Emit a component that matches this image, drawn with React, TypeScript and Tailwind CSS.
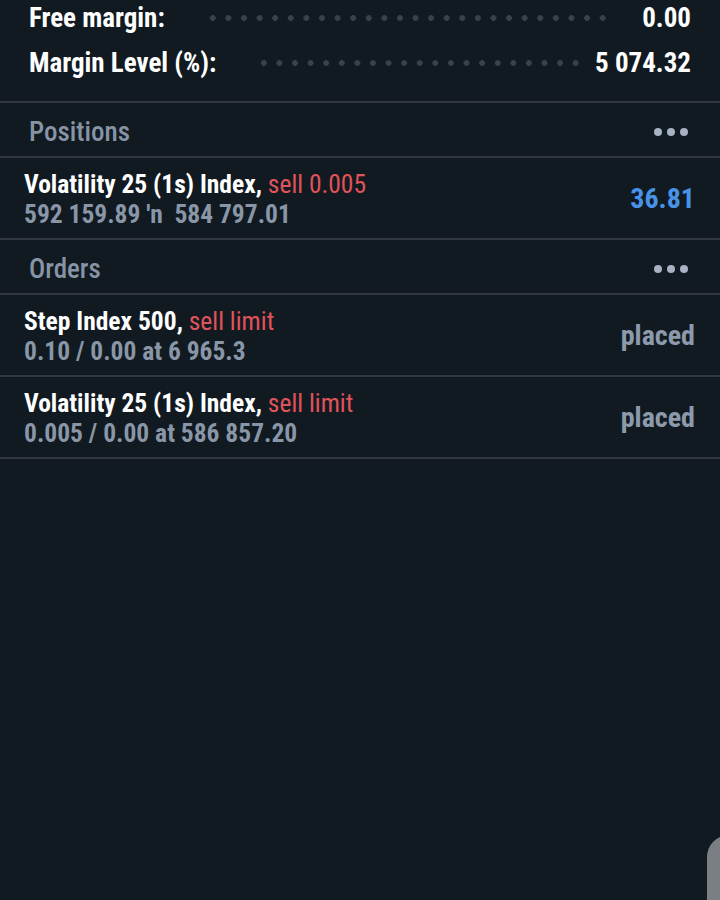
const font = "font-['Roboto_Condensed','Liberation_Sans_Narrow',Roboto,sans-serif] [font-stretch:condensed]";

type Order = { symbol: string; side: string; detail: string; state: string };

const orders: Order[] = [
    { symbol: 'Step Index 500,', side: 'sell limit', detail: '0.10 / 0.00 at 6 965.3', state: 'placed' },
    { symbol: 'Volatility 25 (1s) Index,', side: 'sell limit', detail: '0.005 / 0.00 at 586 857.20', state: 'placed' },
];

const Leader = ({ className }: { className: string }) => (
    <div className={`flex-1 h-[6px] bg-[radial-gradient(circle,#39414a_2.6px,transparent_3.1px)] bg-size-[15.6px_6px] bg-repeat-x ${className}`} />
);

const Divider = () => <div className="h-[2px] bg-[#30373f]" />;

const MoreDots = () => (
    <div className="flex gap-[5px]">
        <span className="w-[8px] h-[8px] rounded-full bg-[#a7b2c2]" />
        <span className="w-[8px] h-[8px] rounded-full bg-[#a7b2c2]" />
        <span className="w-[8px] h-[8px] rounded-full bg-[#a7b2c2]" />
    </div>
);

const SectionHeader = ({ title }: { title: string }) => (
    <div className="flex items-center justify-between h-[53px] pt-[5px] pl-[29px] pr-[32px]">
        <span className="text-[27px] font-medium text-[#8794a5]">{title}</span>
        <MoreDots />
    </div>
);

const TradeRow = ({ symbol, side, detail, right, rightClass }: { symbol: string; side: string; detail: string; right: string; rightClass: string }) => (
    <div className="flex items-center justify-between h-[80px] pt-[2px] pl-[24px] pr-[25px]">
        <div className="flex flex-col leading-[30px]">
            <div className="text-[25.5px]">
                <span className="font-bold text-white">{symbol}</span>{' '}
                <span className="text-[#e0535a]">{side}</span>
            </div>
            <div className="text-[25.5px] font-bold text-[#8996a7] whitespace-pre">{detail}</div>
        </div>
        <div className={rightClass}>{right}</div>
    </div>
);

export default function App() {
    return (
        <div className={`relative w-full h-[900px] overflow-hidden bg-[#111a21] ${font}`}>
            <div className="flex flex-col pt-[2px] pl-[29px] pr-[29px] pb-[22px]">
                <div className="flex items-center h-[32px]">
                    <span className="text-[27px] font-bold text-white">Free margin:</span>
                    <Leader className="ml-[40px] mr-[34px]" />
                    <span className="text-[27px] font-bold text-white">0.00</span>
                </div>
                <div className="flex items-center h-[32px] mt-[13px]">
                    <span className="text-[27px] font-bold text-white">Margin Level (%):</span>
                    <Leader className="ml-[40px] mr-[16px]" />
                    <span className="text-[27px] font-bold text-white">5 074.32</span>
                </div>
            </div>
            <Divider />
            <SectionHeader title="Positions" />
            <Divider />
            <TradeRow
                symbol="Volatility 25 (1s) Index,"
                side="sell 0.005"
                detail="592 159.89 ′n  584 797.01"
                right="36.81"
                rightClass="text-[28px] font-bold text-[#4793e8]"
            />
            <Divider />
            <SectionHeader title="Orders" />
            <Divider />
            {orders.map((o) => (
                <div key={o.detail}>
                    <TradeRow
                        symbol={o.symbol}
                        side={o.side}
                        detail={o.detail}
                        right={o.state}
                        rightClass="text-[28px] font-bold text-[#8d9aac]"
                    />
                    <Divider />
                </div>
            ))}
            <div className="absolute left-[707px] top-[835px] w-[40px] h-[100px] rounded-tl-[22px] bg-[#7b7f84]" />
        </div>
    );
}
